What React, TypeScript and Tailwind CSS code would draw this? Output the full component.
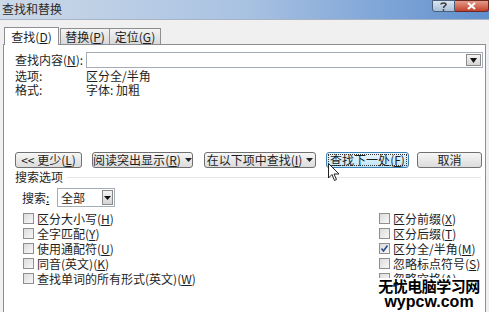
import React from "react";

const F = { fontFamily: '"Noto Sans CJK SC", "Noto Sans", sans-serif' };

function U({ t, k }: { t: string; k: string }) {
  return (
    <span className="whitespace-nowrap">
      {t}(<span className="underline">{k}</span>)
    </span>
  );
}

function Tri() {
  return (
    <svg width="7" height="4" viewBox="0 0 7 4" className="ml-[4px] shrink-0">
      <path d="M0 0 L7 0 L3.5 4 Z" fill="#222" />
    </svg>
  );
}

function Btn({
  children,
  w,
  ml,
  hl,
}: {
  children: React.ReactNode;
  w: string;
  ml: string;
  hl?: boolean;
}) {
  return (
    <div
      className={`${w} ${ml} h-[16px] rounded-[3px] border flex items-center justify-center text-[12px] leading-none whitespace-nowrap ${
        hl
          ? "border-[#3c7fb1] bg-gradient-to-b from-[#eaf6fd] to-[#bee6fd]"
          : "border-[#707070] bg-gradient-to-b from-[#f6f6f6] to-[#dcdcdc]"
      }`}
    >
      {hl ? (
        <div className="border border-dotted border-[#333] px-[1px] h-[12px] flex items-center whitespace-nowrap">
          {children}
        </div>
      ) : (
        children
      )}
    </div>
  );
}

function Check({ label, checked }: { label: React.ReactNode; checked?: boolean }) {
  return (
    <div className="h-[15px] flex items-center">
      <div className="w-[11px] h-[11px] border border-[#8f8f8f] bg-gradient-to-br from-[#dcdcdc] to-[#f8f8f8] flex items-center justify-center">
        {checked && (
          <svg width="9" height="9" viewBox="0 0 9 9">
            <path d="M1.5 4.5 L3.5 7 L7.5 1.5" stroke="#2a4a8a" strokeWidth="1.6" fill="none" />
          </svg>
        )}
      </div>
      <div className="ml-[3px] text-[12px] leading-none text-[#1e1e1e] whitespace-nowrap">{label}</div>
    </div>
  );
}

export default function App() {
  return (
    <div
      className="w-[489px] h-[312px] relative overflow-hidden bg-[#f0f0f0] flex flex-col text-[#1e1e1e]"
      style={F}
    >
      {/* Title bar */}
      <div className="h-[19px] flex justify-between bg-gradient-to-r from-[#ccd9e8] via-[#a9c2e2] to-[#5f8fcd]">
        <div className="pl-[2px] pt-[2px] text-[12px] leading-[14px] text-[#2a2a2a]">查找和替换</div>
        <div className="flex items-start">
          <div className="w-[23px] h-[12px] border border-[#4a5f7a] rounded-bl-[3px] bg-gradient-to-b from-[#dbe5f1] to-[#a9bfd8] flex items-center justify-center">
            <svg width="7" height="9" viewBox="0 0 7 9">
              <path d="M1 2.5 C1 0.5 6 0.5 6 2.5 C6 4 3.5 4 3.5 6" stroke="#3a3a3a" strokeWidth="1.5" fill="none" />
              <rect x="2.7" y="7.2" width="1.6" height="1.6" fill="#3a3a3a" />
            </svg>
          </div>
          <div className="w-[34px] h-[12px] border border-[#6a2a22] border-l-0 rounded-br-[3px] bg-gradient-to-b from-[#e39a88] to-[#c2402c] flex items-center justify-center">
            <svg width="9" height="8" viewBox="0 0 9 8">
              <path d="M1 1 L8 7 M8 1 L1 7" stroke="white" strokeWidth="2" />
            </svg>
          </div>
        </div>
      </div>
      <div className="h-[1px] bg-[#a8b4c4]" />

      {/* Tabs */}
      <div className="h-[24px] flex items-end pl-[4px] pt-[7px]">
        <div className="w-[55px] h-[18px] bg-white border border-b-0 border-[#8c8e94] flex items-center justify-center text-[12px] leading-none relative top-[1px] z-10">
          <U t="查找" k="D" />
        </div>
        <div className="ml-[1px] w-[50px] h-[16px] border border-b-0 border-[#8e8f8f] bg-gradient-to-b from-[#f3f3f3] to-[#d9d9d9] flex items-center justify-center text-[12px] leading-none">
          <U t="替换" k="P" />
        </div>
        <div className="w-[51px] h-[16px] border border-b-0 border-l-0 border-[#8e8f8f] bg-gradient-to-b from-[#f3f3f3] to-[#d9d9d9] flex items-center justify-center text-[12px] leading-none">
          <U t="定位" k="G" />
        </div>
      </div>

      {/* Panel */}
      <div className="flex-1 ml-[3px] w-[483px] bg-white border border-b-0 border-[#8c8e94] flex flex-col">
        <div className="mt-[7px] h-[16px] flex items-center pl-[11px]">
          <div className="w-[71px] text-[12px] leading-none whitespace-nowrap">
            查找内容(<span className="underline">N</span>):
          </div>
          <div className="w-[397px] h-[16px] border border-[#a5acb5] flex justify-end items-center pr-[1px]">
            <div className="w-[15px] h-[12px] border border-[#8a8a8a] bg-gradient-to-b from-[#f4f4f4] to-[#d4d4d4] flex items-center justify-center">
              <svg width="7" height="5" viewBox="0 0 7 5">
                <path d="M0 0 L7 0 L3.5 5 Z" fill="#111" />
              </svg>
            </div>
          </div>
        </div>
        <div className="mt-[1px] h-[14px] flex items-center pl-[11px] text-[12px] leading-none">
          <div className="w-[71px]">选项:</div>
          <div>区分全/半角</div>
        </div>
        <div className="h-[14px] flex items-center pl-[11px] text-[12px] leading-none">
          <div className="w-[71px]">格式:</div>
          <div>字体: 加粗</div>
        </div>

        <div className="mt-[55px] flex items-center">
          <Btn w="w-[67px]" ml="ml-[11px]">
            <span>
              &lt;&lt; 更少(<span className="underline">L</span>)
            </span>
          </Btn>
          <Btn w="w-[101px]" ml="ml-[10px]">
            <U t="阅读突出显示" k="R" />
            <Tri />
          </Btn>
          <Btn w="w-[112px]" ml="ml-[11px]">
            <U t="在以下项中查找" k="I" />
            <Tri />
          </Btn>
          <Btn w="w-[83px]" ml="ml-[10px]" hl>
            <U t="查找下一处" k="F" />
          </Btn>
          <Btn w="w-[65px]" ml="ml-[8px]">
            取消
          </Btn>
        </div>

        <div className="mt-[2px] h-[14px] flex items-center pl-[11px] text-[12px] leading-none">
          <div>搜索选项</div>
          <div className="flex-1 ml-[4px] h-[1px] bg-[#e6e6e6] mr-[4px]" />
        </div>

        <div className="mt-[4px] h-[19px] flex items-center pl-[18px] text-[12px] leading-none">
          <div className="w-[35px]">
            搜索<span className="underline">:</span>
          </div>
          <div className="w-[58px] h-[19px] border border-[#a5acb5] flex items-center justify-between pl-[3px] pr-[1px]">
            <span>全部</span>
            <div className="w-[11px] h-[15px] border border-[#8a8a8a] bg-gradient-to-b from-[#f4f4f4] to-[#d4d4d4] flex items-center justify-center">
              <svg width="7" height="4" viewBox="0 0 7 4">
                <path d="M0 0 L7 0 L3.5 4 Z" fill="#111" />
              </svg>
            </div>
          </div>
        </div>

        <div className="mt-[4px] flex">
          <div className="pl-[19px] w-[375px] flex flex-col">
            <Check label={<U t="区分大小写" k="H" />} />
            <Check label={<U t="全字匹配" k="Y" />} />
            <Check label={<U t="使用通配符" k="U" />} />
            <Check label={<U t="同音(英文)" k="K" />} />
            <Check label={<U t="查找单词的所有形式(英文)" k="W" />} />
          </div>
          <div className="flex flex-col">
            <Check label={<U t="区分前缀" k="X" />} />
            <Check label={<U t="区分后缀" k="T" />} />
            <Check label={<U t="区分全/半角" k="M" />} checked />
            <Check label={<U t="忽略标点符号" k="S" />} />
            <Check label={<U t="忽略空格" k="A" />} />
          </div>
        </div>
      </div>

      {/* Mouse cursor */}
      <svg className="absolute left-[328px] top-[163px]" width="12" height="19" viewBox="0 0 12 19">
        <path d="M0.5 0.5 L0.5 15 L4 11.5 L6.5 17.5 L8.5 16.5 L6 11 L11 11 Z" fill="white" stroke="#222" strokeWidth="1" />
      </svg>

      {/* Watermark */}
      <div className="absolute left-[377px] top-[278px] w-[104px] h-[34px] bg-white flex flex-col items-center">
        <div className="text-[15px] leading-[16px] font-bold text-black tracking-[-0.5px]" style={F}>
          无忧电脑学习网
        </div>
        <div
          className="text-[16px] leading-[16px] font-bold text-black"
          style={{ fontFamily: '"Liberation Sans", Arial, sans-serif' }}
        >
          wypcw.com
        </div>
      </div>
    </div>
  );
}
